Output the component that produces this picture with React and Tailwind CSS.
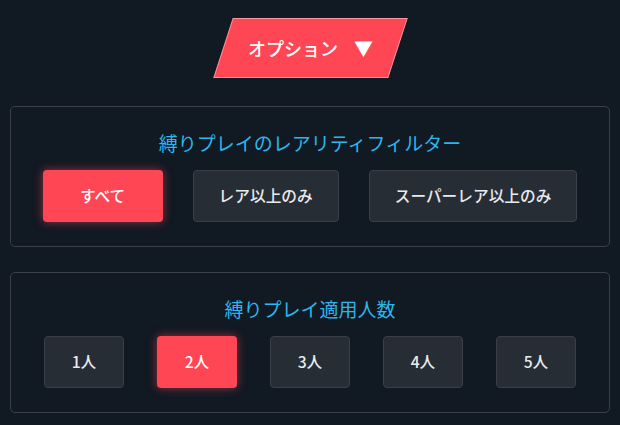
import React, { useState } from 'react';

const font = { fontFamily: '"Noto Sans CJK JP", "Noto Sans", sans-serif' };

function Panel({ title, children }) {
    return (
        <div className="border border-[#3b4048] rounded-[5px] pt-[22px] pb-[24px] flex flex-col items-center">
            <h2 className="text-[19px] leading-[28px] text-[#2cb6ec]">{title}</h2>
            <div className="mt-[13px] flex justify-center">{children}</div>
        </div>
    );
}

function Choice({ label, active, onClick, wide }) {
    const base = "h-[52px] rounded-[4px] text-[15.7px] font-medium flex items-center justify-center";
    const size = wide ? " w-[80px]" : " min-w-[120px] px-[25px]";
    const look = active
        ? " bg-[#ff4655] text-white shadow-[0_0_10px_rgba(255,70,85,0.55)]"
        : " bg-[#272d35] border border-[#3b4048] text-[#e8eaee]";
    return (
        <button type="button" className={base + size + look} onClick={onClick}>
            {label}
        </button>
    );
}

export default function App() {
    const [rarity, setRarity] = useState(0);
    const [people, setPeople] = useState(1);

    const rarities = ['すべて', 'レア以上のみ', 'スーパーレア以上のみ'];
    const counts = ['1人', '2人', '3人', '4人', '5人'];

    return (
        <div className="w-[620px] h-[425px] bg-[#111923] overflow-hidden px-[10px] pt-[18px]" style={font}>
            {/* オプション toggle */}
            <div className="flex justify-center">
                <button type="button"
                        className="w-[175px] h-[60px] -skew-x-[18deg] bg-[#ff4655] border border-[#f5c9cc]/60 flex items-center justify-center">
                    <span className="skew-x-[18deg] text-white text-[18px] font-medium flex items-center">
                        オプション
                        <span className="ml-[16px] text-[19px]">▼</span>
                    </span>
                </button>
            </div>

            <div className="mt-[28px] flex flex-col gap-[25px]">
                <Panel title="縛りプレイのレアリティフィルター">
                    <div className="flex gap-[30px]">
                        {rarities.map((r, i) => (
                            <Choice key={r} label={r} active={rarity === i} onClick={() => setRarity(i)}/>
                        ))}
                    </div>
                </Panel>

                <Panel title="縛りプレイ適用人数">
                    <div className="flex gap-[33px]">
                        {counts.map((c, i) => (
                            <Choice key={c} label={c} wide active={people === i} onClick={() => setPeople(i)}/>
                        ))}
                    </div>
                </Panel>
            </div>
        </div>
    );
}
